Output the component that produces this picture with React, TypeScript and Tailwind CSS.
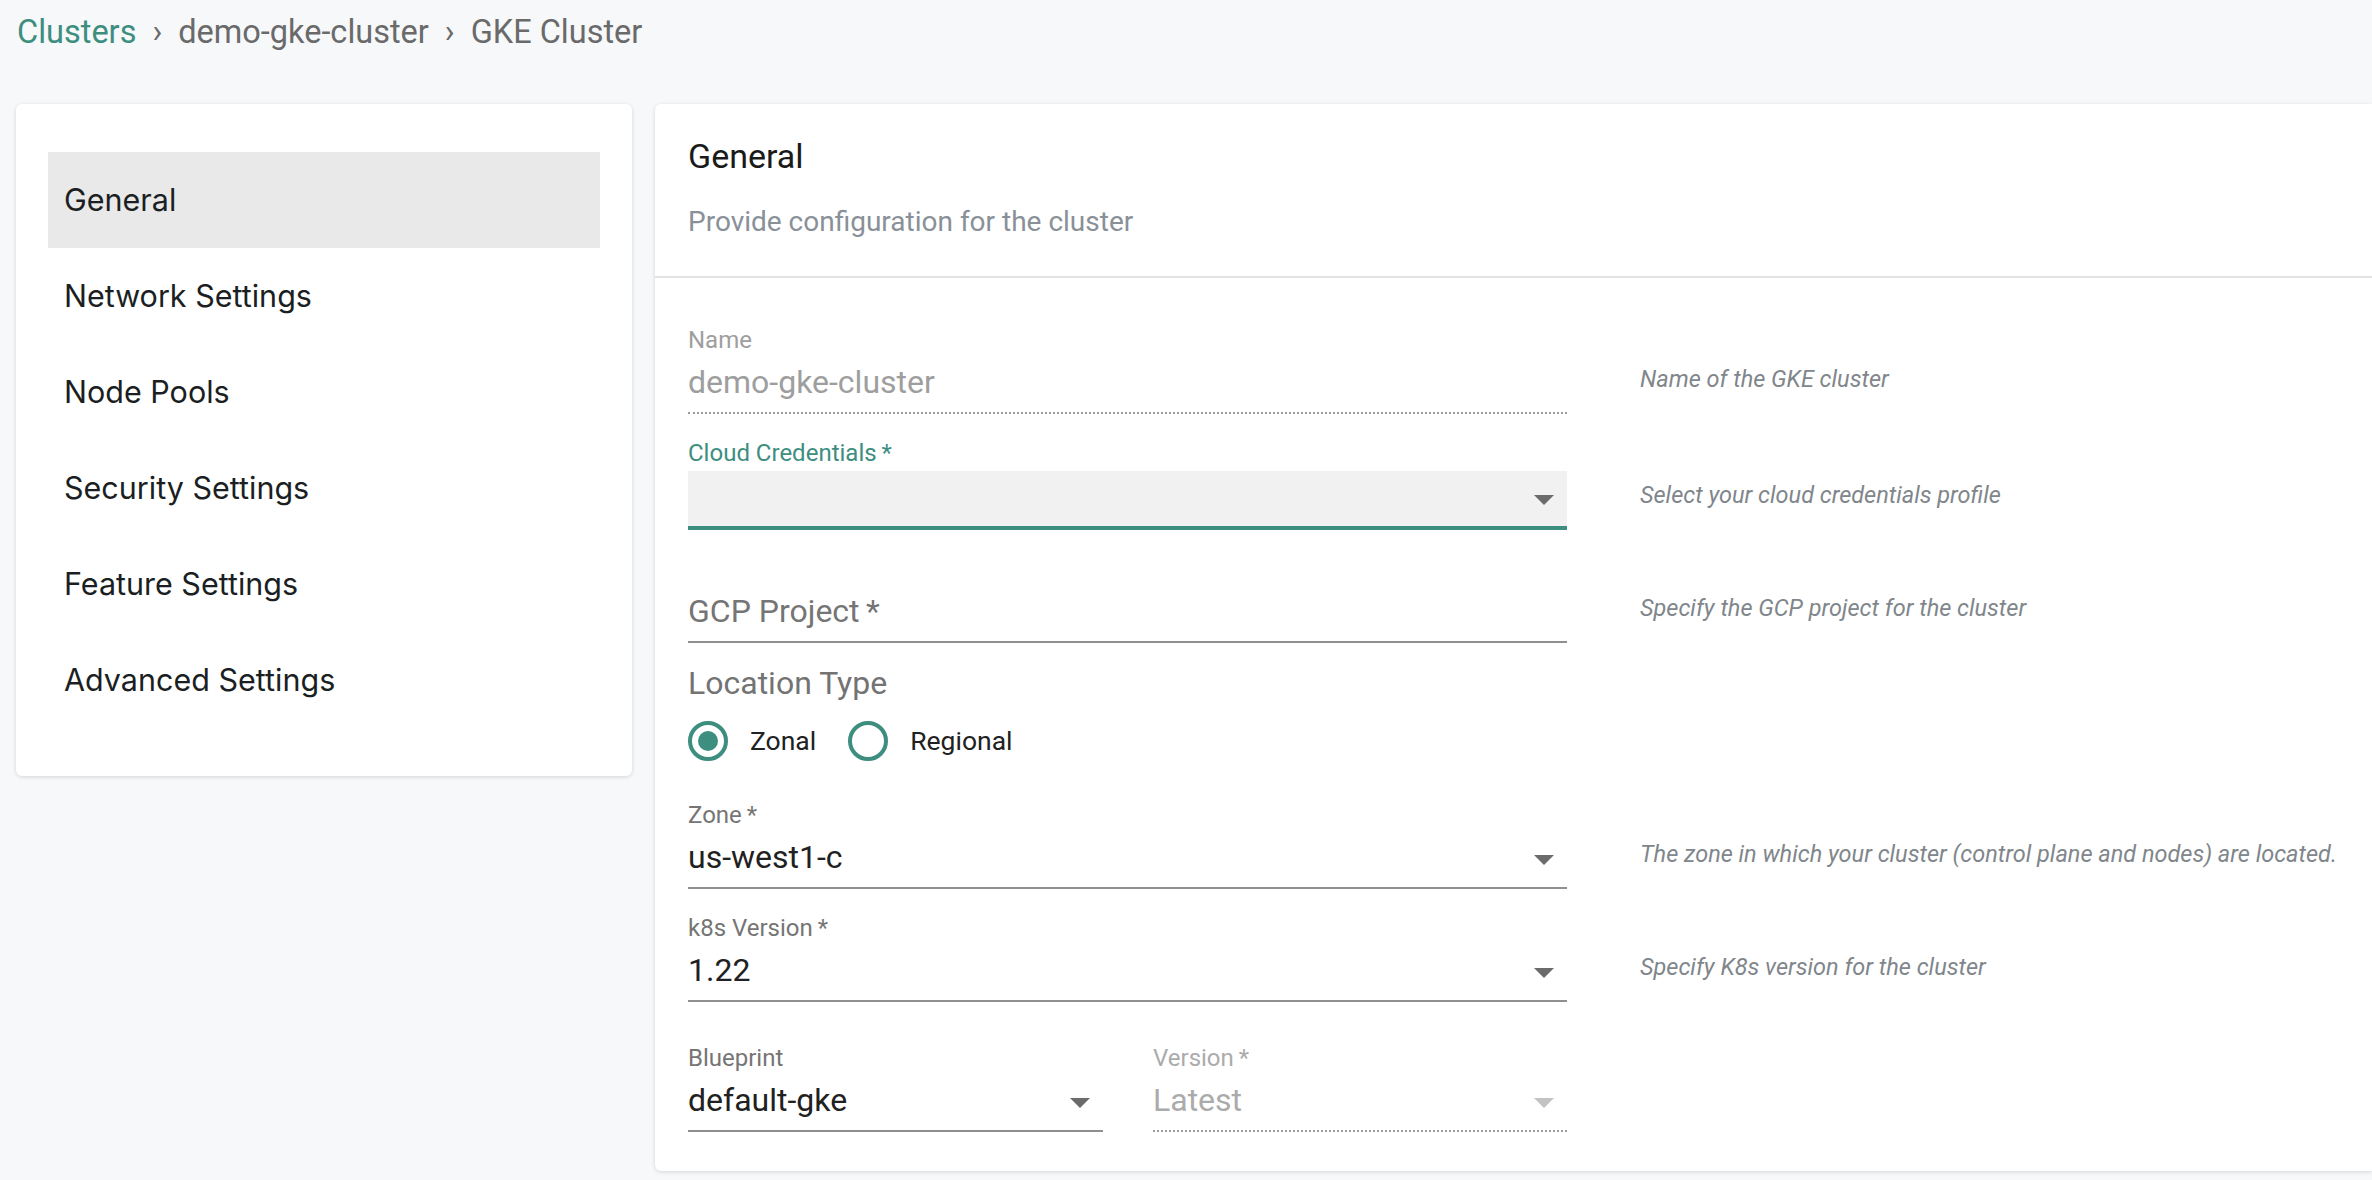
import React from "react";

const navItems = [
  "General",
  "Network Settings",
  "Node Pools",
  "Security Settings",
  "Feature Settings",
  "Advanced Settings",
];

const Caret = ({ light }: { light?: boolean }) => (
  <svg
    width="20"
    height="10"
    viewBox="0 0 20 10"
    className={light ? "fill-[#c2c2c2] shrink-0" : "fill-[#6b6b6b] shrink-0"}
  >
    <path d="M0 0h20L10 10z" />
  </svg>
);

const Row = ({ children, help }: { children: React.ReactNode; help?: string }) => (
  <div className="flex">
    <div className="w-[879px] shrink-0">{children}</div>
    {help && (
      <div className="ml-[73px] self-end mb-[19px] text-[23.5px] leading-[32px] italic text-[#80868b] whitespace-nowrap">
        {help}
      </div>
    )}
  </div>
);

const SelectField = ({
  label,
  value,
  disabled,
}: {
  label: string;
  value: string;
  disabled?: boolean;
}) => (
  <div className="flex flex-col">
    <div
      className={
        disabled
          ? "text-[24px] leading-[32px] text-[#ababab]"
          : "text-[24px] leading-[32px] text-[#757575]"
      }
    >
      {label}
    </div>
    <div
      className={
        disabled
          ? "mt-[6px] flex items-center justify-between pb-[10px] border-b-2 border-dotted border-[#9a9a9a]"
          : "mt-[6px] flex items-center justify-between pb-[10px] border-b-2 border-[#8f8f8f]"
      }
    >
      <span
        className={
          disabled
            ? "text-[32px] leading-[40px] text-[#ababab]"
            : "text-[32px] leading-[40px] text-[#212121]"
        }
      >
        {value}
      </span>
      <span className="mr-[13px] mt-[6px] flex">
        <Caret light={disabled} />
      </span>
    </div>
  </div>
);

const Radio = ({ checked, label }: { checked?: boolean; label: string }) => (
  <div className="flex items-center">
    <div className="w-[40px] h-[40px] rounded-full border-[4px] border-[#3d8e7f] flex items-center justify-center">
      {checked && <div className="w-[20px] h-[20px] rounded-full bg-[#3d8e7f]" />}
    </div>
    <span className="ml-[22px] text-[26.5px] leading-[40px] text-[#212121]">{label}</span>
  </div>
);

export default function App() {
  return (
    <div className="w-[2372px] h-[1180px] overflow-hidden bg-[#f7f8fa] font-['Roboto',sans-serif]">
      <div className="h-[104px] pt-[12px] pl-[17px] flex items-start text-[32.5px] leading-[40px] text-[#6a6a6a]">
        <span className="text-[#3d8e7f]">Clusters</span>
        <span className="mx-[16px]">›</span>
        <span>demo-gke-cluster</span>
        <span className="mx-[16px]">›</span>
        <span>GKE Cluster</span>
      </div>

      <div className="flex items-start gap-[23px] pl-[16px]">
        <div className="w-[616px] shrink-0 bg-white rounded-[6px] shadow-[0_1px_4px_rgba(0,0,0,0.14)] px-[32px] pt-[48px] pb-[48px]">
          {navItems.map((item, i) => (
            <div
              key={item}
              className={
                i === 0
                  ? "h-[96px] flex items-center pl-[16px] bg-[#e9e9e9] font-['Inter',sans-serif] text-[30.5px] text-[#1b1f23]"
                  : "h-[96px] flex items-center pl-[16px] font-['Inter',sans-serif] text-[30.5px] text-[#1b1f23]"
              }
            >
              {item}
            </div>
          ))}
        </div>

        <div className="flex-1 min-w-0 h-[1067px] bg-white rounded-l-[6px] shadow-[0_1px_4px_rgba(0,0,0,0.14)]">
          <div className="pl-[33px] pt-[32px] pb-[34px] border-b-2 border-[#e3e3e3]">
            <div className="text-[34px] leading-[40px] text-[#1a1a1a]">General</div>
            <div className="mt-[26px] text-[28px] leading-[40px] text-[#899098]">
              Provide configuration for the cluster
            </div>
          </div>

          <div className="pl-[33px] pt-[46px] pb-[40px]">
            <Row help="Name of the GKE cluster">
              <div className="text-[24px] leading-[32px] text-[#9e9e9e]">Name</div>
              <div className="mt-[6px] pb-[10px] border-b-2 border-dotted border-[#9a9a9a] text-[32px] leading-[40px] text-[#9e9e9e]">
                demo-gke-cluster
              </div>
            </Row>

            <div className="mt-[23px]">
              <Row help="Select your cloud credentials profile">
                <div className="text-[24px] leading-[32px] text-[#3d8e7f]">Cloud Credentials&thinsp;*</div>
                <div className="mt-[2px] h-[59px] bg-[#f1f1f1] border-b-4 border-[#3d8e7f] flex items-center justify-end pr-[13px] pt-[3px]">
                  <Caret />
                </div>
              </Row>
            </div>

            <div className="mt-[61px]">
              <Row help="Specify the GCP project for the cluster">
                <div className="pb-[10px] border-b-2 border-[#8f8f8f] text-[32px] leading-[40px] text-[#757575]">
                  GCP Project&thinsp;*
                </div>
              </Row>
            </div>

            <div className="mt-[20px] text-[32px] leading-[40px] text-[#737373]">Location Type</div>
            <div className="mt-[18px] flex items-center gap-[32px]">
              <Radio checked label="Zonal" />
              <Radio label="Regional" />
            </div>

            <div className="mt-[38px]">
              <Row help="The zone in which your cluster (control plane and nodes) are located.">
                <SelectField label={"Zone\u2009*"} value="us-west1-c" />
              </Row>
            </div>

            <div className="mt-[23px]">
              <Row help="Specify K8s version for the cluster">
                <SelectField label={"k8s Version\u2009*"} value="1.22" />
              </Row>
            </div>

            <div className="mt-[40px] w-[879px] flex gap-[50px]">
              <div className="w-[415px]">
                <SelectField label="Blueprint" value="default-gke" />
              </div>
              <div className="flex-1">
                <SelectField label={"Version\u2009*"} value="Latest" disabled />
              </div>
            </div>
          </div>
        </div>
      </div>
    </div>
  );
}
